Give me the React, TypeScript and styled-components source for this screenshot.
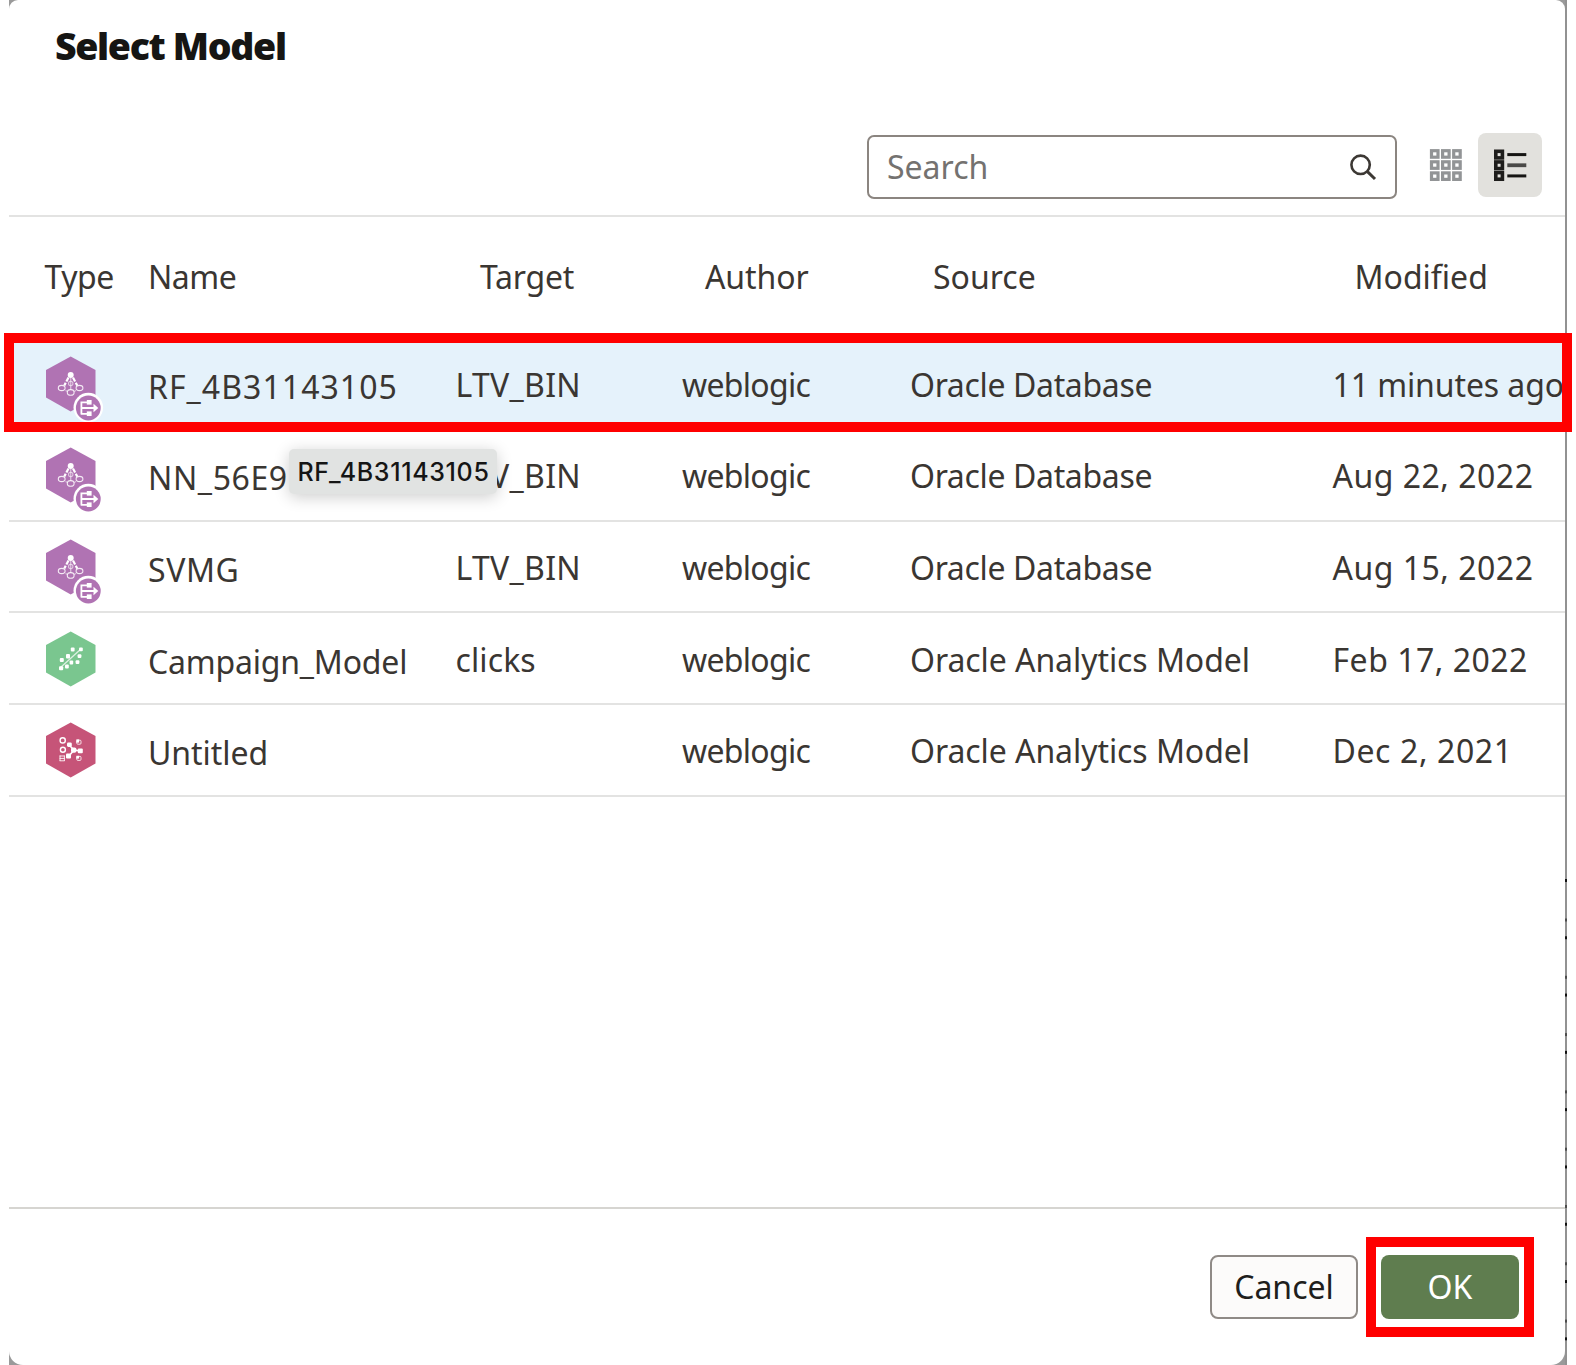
import React from "react";
import styled, { createGlobalStyle } from "styled-components";

const GlobalStyle = createGlobalStyle`
  *, *::before, *::after { box-sizing: border-box; }
  body {
    margin: 0;
    background: #fff;
    color: #3a3632;
    font-family: "Noto Sans", "Open Sans", sans-serif;
    font-size: 32px;
    line-height: 44px;
    overflow: hidden;
  }
  svg { overflow: visible; }
`;

const Backdrop = styled.div`
  display: flex;
  width: 1558px;
  height: 1365px;
  margin-left: 9px;
  background: #9a9a9a;
`;

const Dialog = styled.main`
  display: flex;
  flex-direction: column;
  flex: none;
  width: 1556px;
  height: 1365px;
  background: #fff;
  border-radius: 9px 9px 14px 14px;
`;

const PageEdge = styled.div`
  flex: none;
  width: 2px;
  padding-top: 878px;
  background: #929292;
  &::after {
    content: "";
    display: block;
    height: 487px;
    background:
      linear-gradient(transparent 40px, #4c4c4c 41px 43px, transparent 44px) 0 0 / 2px 57.3px,
      linear-gradient(transparent 1px, #111 1px 4px, transparent 4px) 0 57.3px / 2px 57.3px;
  }
`;

const TitleBar = styled.header`
  height: 115px;
  padding: 24px 46px 0;
`;

const Title = styled.h1`
  margin: 0;
  font-size: 37.5px;
  font-weight: 900;
  line-height: 44px;
  letter-spacing: -1.35px;
  color: #161513;
`;

const Toolbar = styled.div`
  display: flex;
  align-items: flex-start;
  justify-content: flex-end;
  height: 102px;
  padding: 18px 23px 0 0;
  border-bottom: 2px solid #e3e3e2;
`;

const SearchField = styled.label`
  display: flex;
  align-items: center;
  justify-content: space-between;
  width: 530px;
  height: 64px;
  margin: 2px 17px 0 0;
  padding: 0 17px 0 18px;
  border: 2px solid #8b8580;
  border-radius: 7px;
  color: #747270;
`;

const ViewButton = styled.button<{ $active?: boolean }>`
  display: grid;
  place-items: center;
  width: 64px;
  height: 64px;
  padding: 1px 0 0;
  border: 0;
  border-radius: 8px;
  background: ${(p) => (p.$active ? "#e2e1dd" : "transparent")};
`;

const columns = "139px 307.5px 226.5px 228px 422.5px 1fr";

const HeaderRow = styled.div`
  display: grid;
  grid-template-columns: ${columns};
  align-items: center;
  flex: none;
  height: 121.4px;
  padding-bottom: 1px;
`;

const HeaderCell = styled.div<{ $indent?: number; $track?: number }>`
  padding-left: ${(p) => p.$indent ?? 0}px;
  letter-spacing: ${(p) => p.$track ?? 0}px;
  white-space: nowrap;
`;

const Row = styled.div<{ $selected?: boolean }>`
  position: relative;
  display: grid;
  grid-template-columns: ${columns};
  align-items: center;
  flex: none;
  height: 91.65px;
  border-bottom: 2px solid #e3e3e2;
  background: ${(p) => (p.$selected ? "#e5f2fb" : "transparent")};
`;

const Cell = styled.div<{ $track?: number; $drop?: number }>`
  min-width: 0;
  padding-top: ${(p) => p.$drop ?? 3}px;
  letter-spacing: ${(p) => p.$track ?? 0}px;
  white-space: nowrap;
`;

const IconCell = styled.div`
  display: flex;
  padding: 7px 0 0 35px;
`;

const RowHighlight = styled.div`
  position: absolute;
  inset: -5px -7px -4px -5px;
  border: 10px solid #ff0000;
`;

const Tooltip = styled.div`
  position: absolute;
  left: 279.5px;
  top: 19px;
  z-index: 2;
  width: 208px;
  height: 45px;
  padding-left: 9px;
  border-radius: 5px;
  background: #e1e3e2;
  box-shadow: 0 3px 16px rgba(0, 0, 0, 0.2);
  color: #151515;
  font-family: Inter, sans-serif;
  font-size: 25px;
  font-weight: 450;
  line-height: 46px;
  letter-spacing: 0.65px;
  white-space: nowrap;
`;

const Footer = styled.footer`
  display: flex;
  justify-content: flex-end;
  gap: 23px;
  height: 158px;
  margin-top: auto;
  padding: 46px 46px 0 0;
  border-top: 2px solid #d6d5d1;
`;

const Button = styled.button<{ $primary?: boolean }>`
  width: ${(p) => (p.$primary ? 138 : 148)}px;
  height: 64px;
  padding: 0;
  border: ${(p) => (p.$primary ? "0" : "2px solid #8f8a86")};
  border-radius: 8px;
  background: ${(p) => (p.$primary ? "#5f7d4f" : "#fcfbfa")};
  color: ${(p) => (p.$primary ? "#fff" : "#201e1c")};
  font: inherit;
`;

const ButtonFrame = styled.div`
  position: relative;
  height: 64px;
  &::after {
    content: "";
    position: absolute;
    inset: -18px -15px;
    border: 10px solid #ff0000;
  }
`;

const HEX = "M26.7 2.5 51.5 16v27.5L26.7 57.5 2 43.5V16z";

function DatabaseModelIcon() {
  return (
    <svg width="62" height="66" viewBox="0 0 62 66">
      <path d={HEX} fill="#b073b3" />
      <g fill="none" stroke="#fff" strokeWidth="1.1">
        <path d="M24.5 23.5l-4.2 8M29 23.5l4.2 8" strokeWidth="2.2" strokeDasharray="4.5 1.5" />
        <path d="M26.7 24v12" opacity="0.5" strokeWidth="1.4" />
        <circle cx="26.7" cy="29.5" r="2.2" opacity="0.6" />
        <ellipse cx="17.7" cy="34" rx="3.4" ry="2.6" opacity="0.85" />
        <ellipse cx="26.7" cy="38.4" rx="3.4" ry="2.8" opacity="0.85" />
        <ellipse cx="35.5" cy="34" rx="3.4" ry="2.6" opacity="0.85" />
        <path d="M21.5 36.5l2 1M30 37.5l2-1" opacity="0.6" />
      </g>
      <circle cx="26.7" cy="21" r="3" fill="#fff" />
      <circle cx="44.3" cy="53.6" r="14.8" fill="#fff" />
      <circle cx="44.3" cy="54" r="12.4" fill="#b073b3" />
      <g fill="none" stroke="#fff" strokeWidth="1.8">
        <path d="M37.4 47.4v13.2M37 48.3h6M37 59.8h6M37 54h14.5" />
      </g>
      <g fill="#fff">
        <path d="M49.5 49.8l4.8 4.2-4.8 4.2z" />
        <rect x="42.8" y="46" width="4.8" height="4.6" />
        <rect x="42.8" y="57.4" width="4.8" height="4.6" />
      </g>
    </svg>
  );
}

function RegressionIcon() {
  return (
    <svg width="62" height="66" viewBox="0 0 62 66">
      <path d={HEX} fill="#7ac68f" />
      <path d="M16 39 37.5 19.5" stroke="#fff" strokeWidth="1.3" opacity="0.75" />
      <g fill="#fff">
        <rect x="26.8" y="18.6" width="3.8" height="3.8" rx="1" />
        <rect x="35" y="18.4" width="3.8" height="3.8" rx="1" />
        <rect x="22" y="25" width="4" height="4.4" rx="1" />
        <rect x="33.6" y="25.2" width="3.8" height="3.8" rx="1" />
        <rect x="15.8" y="29" width="4" height="4" rx="1" />
        <rect x="25.6" y="31.6" width="3.6" height="4" rx="1" />
        <rect x="31.6" y="31.2" width="3.8" height="3.8" rx="1" />
        <rect x="21" y="35.6" width="3.8" height="4" rx="1" />
        <rect x="15" y="37.2" width="4.2" height="4" rx="1" />
      </g>
    </svg>
  );
}

function ClassifierIcon() {
  return (
    <svg width="62" height="66" viewBox="0 0 62 66">
      <path d={HEX} fill="#c65478" />
      <g fill="none" stroke="#fff" strokeWidth="1.4">
        <circle cx="18.7" cy="20.4" r="2.6" />
        <circle cx="18.9" cy="29.8" r="2.5" />
        <path d="M15.6 36h5M15.6 38.4h5M15.6 40.8h5M16 35.5v5.5M20.4 35.5v5.5" strokeWidth="1" opacity="0.85" />
        <path d="M25 25l5 5 6 1M30 30l-5 6" strokeWidth="1.6" />
        <rect x="32.8" y="20.2" width="4.2" height="4" rx="1" strokeWidth="1" opacity="0.8" />
        <rect x="32.8" y="36.4" width="4.2" height="4" rx="1" strokeWidth="1" opacity="0.8" />
      </g>
      <g fill="#fff">
        <rect x="23" y="22.4" width="4.8" height="4.6" rx="1.4" />
        <rect x="27" y="27.4" width="5.4" height="5.4" rx="1.8" />
        <rect x="33.8" y="28.4" width="5" height="4.8" rx="1" />
        <rect x="22" y="33.6" width="5" height="5" rx="1" />
        <rect x="32.3" y="19.4" width="2.8" height="3.2" />
        <rect x="32.3" y="35.8" width="2.8" height="2.8" />
      </g>
    </svg>
  );
}

function SearchIcon() {
  return (
    <svg width="30" height="30" viewBox="0 0 30 30" fill="none" stroke="#3c3834" strokeWidth="2.6">
      <circle cx="12.6" cy="12.8" r="9.2" />
      <path d="M19.2 19.4 27 27" strokeWidth="3" />
    </svg>
  );
}

const tiles = [0, 11.1, 22.2];

function GridIcon() {
  return (
    <svg width="32" height="34" viewBox="0 0 32 34">
      {tiles.map((y) =>
        tiles.map((x) => (
          <rect key={`${x}-${y}`} x={x + 1.5} y={y + 1.7} width="6.5" height="6.5" fill="#fff" stroke="#929496" strokeWidth="3.2" />
        ))
      )}
    </svg>
  );
}

function ListIcon() {
  return (
    <svg width="34" height="34" viewBox="0 0 34 34">
      {tiles.map((y, i) => (
        <g key={y}>
          <rect x="2.8" y={y * 0.96 + 2.3} width="6.6" height="6.6" fill="#e2e1dd" stroke="#1e1d1b" strokeWidth="3.6" />
          <path d={`M14.3 ${y * 0.96 + 5.6}h19`} stroke={i === 1 ? "#4a4947" : "#161513"} strokeWidth={i === 1 ? 3.8 : 3} />
        </g>
      ))}
    </svg>
  );
}

type Field = [text: string, track: number];

interface Model {
  icon: () => React.JSX.Element;
  name: Field;
  target: Field;
  source: Field;
  modified: Field;
}

const database: Field = ["Oracle Database", -0.35];
const analytics: Field = ["Oracle Analytics Model", -0.07];

const models: Model[] = [
  { icon: DatabaseModelIcon, name: ["RF_4B31143105", 1.05], target: ["LTV_BIN", 0.3], source: database, modified: ["11 minutes ago", -0.1] },
  { icon: DatabaseModelIcon, name: ["NN_56E9", 0.6], target: ["LTV_BIN", 0.3], source: database, modified: ["Aug 22, 2022", 0.5] },
  { icon: DatabaseModelIcon, name: ["SVMG", 0.6], target: ["LTV_BIN", 0.3], source: database, modified: ["Aug 15, 2022", 0.5] },
  { icon: RegressionIcon, name: ["Campaign_Model", -0.2], target: ["clicks", 0.1], source: analytics, modified: ["Feb 17, 2022", 0.5] },
  { icon: ClassifierIcon, name: ["Untitled", -0.05], target: ["", 0], source: analytics, modified: ["Dec 2, 2021", 0.6] },
];

export default function App() {
  return (
    <>
      <GlobalStyle />
      <Backdrop>
        <Dialog>
          <TitleBar>
            <Title>Select Model</Title>
          </TitleBar>
          <Toolbar>
            <SearchField>
              Search
              <SearchIcon />
            </SearchField>
            <ViewButton aria-label="Grid view">
              <GridIcon />
            </ViewButton>
            <ViewButton $active aria-label="List view">
              <ListIcon />
            </ViewButton>
          </Toolbar>
          <HeaderRow>
            <HeaderCell $indent={35.5} $track={-0.5}>Type</HeaderCell>
            <HeaderCell $track={-0.5}>Name</HeaderCell>
            <HeaderCell $indent={24.5} $track={-0.2}>Target</HeaderCell>
            <HeaderCell $indent={23} $track={-0.1}>Author</HeaderCell>
            <HeaderCell $indent={23}>Source</HeaderCell>
            <HeaderCell $indent={22}>Modified</HeaderCell>
          </HeaderRow>
          {models.map((m, i) => (
            <Row key={m.name[0]} $selected={i === 0}>
              <IconCell>
                <m.icon />
              </IconCell>
              <Cell $track={m.name[1]} $drop={7}>{m.name[0]}</Cell>
              <Cell $track={m.target[1]}>{m.target[0]}</Cell>
              <Cell $track={-0.7}>weblogic</Cell>
              <Cell $track={m.source[1]}>{m.source[0]}</Cell>
              <Cell $track={m.modified[1]}>{m.modified[0]}</Cell>
              {i === 0 && <RowHighlight />}
              {i === 1 && <Tooltip>RF_4B31143105</Tooltip>}
            </Row>
          ))}
          <Footer>
            <Button>Cancel</Button>
            <ButtonFrame>
              <Button $primary>OK</Button>
            </ButtonFrame>
          </Footer>
        </Dialog>
        <PageEdge />
      </Backdrop>
    </>
  );
}
